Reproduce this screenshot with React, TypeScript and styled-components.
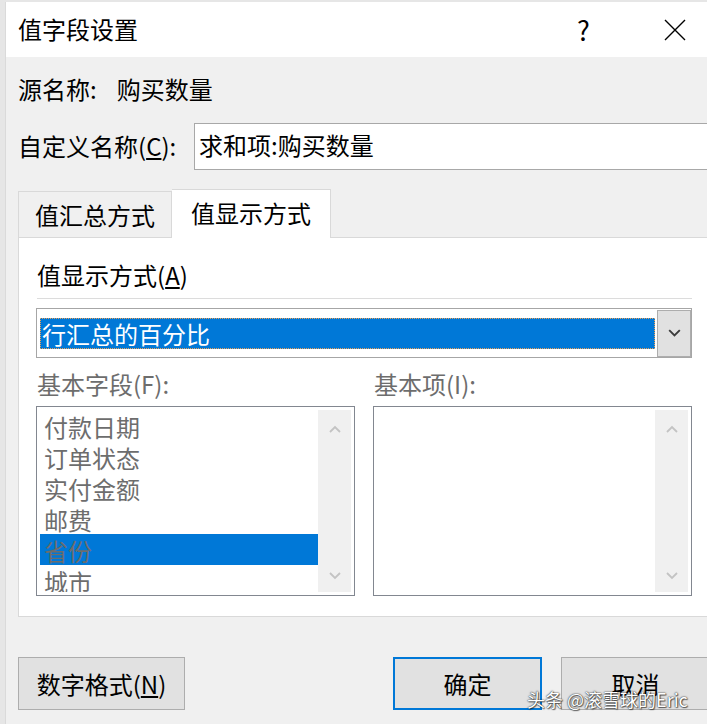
import * as React from "react";
import styled, { createGlobalStyle } from "styled-components";

const GlobalStyle = createGlobalStyle`
  html, body {
    margin: 0;
    padding: 0;
  }
  body {
    font-family: "Noto Sans CJK SC", "Microsoft YaHei", sans-serif;
    background: #e6e6e6;
  }
`;

const Screen = styled.div`
  position: relative;
  width: 707px;
  height: 724px;
  overflow: hidden;
  background: #e6e6e6;
  padding: 2px 0 0 5px;
  box-sizing: border-box;
`;

const Dialog = styled.div`
  display: flex;
  flex-direction: column;
  width: 715px;
  height: 100%;
  background: #f0f0f0;
  border-left: 1px solid #dadada;
  box-sizing: border-box;
  color: #000;
`;

const TitleBar = styled.div`
  display: flex;
  align-items: center;
  height: 55px;
  background: #fff;
  padding-left: 12px;
  flex-shrink: 0;
`;

const Title = styled.div`
  flex: 1;
  font-size: 24px;
  line-height: 30px;
  margin-top: -2px;
`;

const CaptionButton = styled.div`
  width: 91px;
  height: 55px;
  display: flex;
  align-items: center;
  justify-content: center;
  font-size: 27px;
  line-height: 30px;
`;

const Body = styled.div`
  display: flex;
  flex-direction: column;
  padding: 0 10px 0 12px;
  flex: 1;
`;

const SourceRow = styled.div`
  display: flex;
  align-items: center;
  height: 40px;
  margin-top: 11px;
  margin-bottom: 2px;
  font-size: 24px;
`;

const SourceValue = styled.span`
  margin-left: 20px;
`;

const NameRow = styled.div`
  display: flex;
  align-items: center;
  height: 47px;
  margin-top: 13px;
`;

const FieldLabel = styled.label`
  width: 176px;
  flex-shrink: 0;
  font-size: 24px;
  line-height: 30px;
  margin-top: -2px;
`;

const NameInput = styled.div`
  flex: 1;
  height: 47px;
  box-sizing: border-box;
  border: 1px solid #a8a8a8;
  background: #fff;
  font-size: 24px;
  line-height: 41px;
  padding-left: 4px;
`;

const TabBar = styled.div`
  display: flex;
  align-items: flex-end;
  height: 48px;
  margin-top: 19px;
  position: relative;
  z-index: 1;
`;

const Tab = styled.div<{ $selected?: boolean; $width: number }>`
  width: ${(p) => p.$width}px;
  height: ${(p) => (p.$selected ? 49 : 46)}px;
  margin-bottom: ${(p) => (p.$selected ? -1 : 0)}px;
  box-sizing: border-box;
  border: 1px solid #d9d9d9;
  border-bottom: none;
  border-left-width: ${(p) => (p.$selected ? 0 : 1)}px;
  background: ${(p) => (p.$selected ? "#fff" : "#f0f0f0")};
  display: flex;
  align-items: center;
  justify-content: center;
  padding-bottom: ${(p) => (p.$selected ? 2 : 0)}px;
  font-size: 24px;
  line-height: 30px;
`;

const Panel = styled.div`
  display: flex;
  flex-direction: column;
  border: 1px solid #d9d9d9;
  background: #fff;
  padding: 0 17px 20px 17px;
`;

const PanelLabel = styled.div<{ $muted?: boolean }>`
  height: ${(p) => (p.$muted ? 28 : 32)}px;
  line-height: ${(p) => (p.$muted ? 28 : 32)}px;
  font-size: 24px;
  padding-left: 1px;
  color: ${(p) => (p.$muted ? "#6d6d6d" : "#000")};
`;

const ShowLabel = styled(PanelLabel)`
  margin-top: 21px;
  margin-bottom: 1px;
`;

const Separator = styled.div`
  height: 1px;
  margin: 6px 0 0 1px;
  background: #dcdcdc;
`;

const Combo = styled.div`
  display: flex;
  align-items: center;
  height: 50px;
  margin-top: 9px;
  box-sizing: border-box;
  border: 1px solid #a6a6a6;
  background: #fff;
  padding: 1px 0 1px 3px;
`;

const ComboValue = styled.div`
  flex: 1;
  height: 31px;
  box-sizing: border-box;
  margin-right: 2px;
  background: #0078d7;
  border: 1px dotted #e9a15a;
  color: #fff;
  font-size: 24px;
  line-height: 29px;
  padding-left: 1px;
`;

const ComboButton = styled.div`
  width: 34px;
  height: 47px;
  box-sizing: border-box;
  background: #e1e1e1;
  border: 1px solid #adadad;
  display: flex;
  align-items: center;
  justify-content: center;
`;

const TwoColumns = styled.div<{ $gap: number }>`
  display: grid;
  grid-template-columns: 319px 319px;
  column-gap: 18px;
  margin-top: ${(p) => p.$gap}px;
`;

const ListBox = styled.div`
  display: flex;
  height: 190px;
  box-sizing: border-box;
  border: 1px solid #828790;
  background: #fff;
  padding: 3px;
  overflow: hidden;
`;

const Items = styled.div`
  flex: 1;
  overflow: hidden;
`;

const Item = styled.div<{ $selected?: boolean }>`
  height: 31px;
  box-sizing: border-box;
  padding: 2px 0 0 4px;
  line-height: 29px;
  font-size: 24px;
  color: #6d6d6d;
  background: ${(p) => (p.$selected ? "#0078d7" : "transparent")};
`;

const ScrollTrack = styled.div`
  width: 33px;
  flex-shrink: 0;
  background: #f0f0f0;
  display: flex;
  flex-direction: column;
  align-items: center;
  justify-content: space-between;
  padding: 15px 0 12px;
  box-sizing: border-box;
`;

const Footer = styled.div`
  display: flex;
  align-items: center;
  gap: 19px;
  margin-top: 40px;
  height: 53px;
`;

const Button = styled.div<{ $primary?: boolean; $width: number }>`
  width: ${(p) => p.$width}px;
  height: 53px;
  box-sizing: border-box;
  background: #e1e1e1;
  border: ${(p) => (p.$primary ? "2px solid #0078d7" : "1px solid #adadad")};
  display: flex;
  align-items: center;
  justify-content: center;
  font-size: 24px;
  line-height: 30px;
`;

const FooterSpacer = styled.div`
  flex: 1;
`;

const Watermark = styled.div`
  position: absolute;
  left: 527px;
  top: 688px;
  font-size: 18px;
  line-height: 22px;
  color: #fff;
  white-space: nowrap;
  text-shadow: 0 0 1px #333, 0 0 2px rgba(0, 0, 0, 0.7), 1px 1px 1px rgba(0, 0, 0, 0.5);
`;

const Chevron = ({ up, color, w = 12 }: { up?: boolean; color: string; w?: number }) => (
  <svg width={w} height={w / 2 + 2} viewBox="0 0 12 8">
    <path
      d={up ? "M1 7 L6 2 L11 7" : "M1 1 L6 6 L11 1"}
      fill="none"
      stroke={color}
      strokeWidth={1.8}
    />
  </svg>
);

const CloseIcon = () => (
  <svg width="22" height="22" viewBox="0 0 22 22">
    <path d="M1 1 L21 21 M21 1 L1 21" stroke="#000" strokeWidth="1.4" fill="none" />
  </svg>
);

const Scrollbar = () => (
  <ScrollTrack>
    <Chevron up color="#c3c3c3" />
    <Chevron color="#c3c3c3" />
  </ScrollTrack>
);

const baseFields = ["付款日期", "订单状态", "实付金额", "邮费", "省份", "城市"];

export default function App() {
  return (
    <Screen>
      <GlobalStyle />
      <Dialog>
        <TitleBar>
          <Title>值字段设置</Title>
          <CaptionButton>?</CaptionButton>
          <CaptionButton>
            <CloseIcon />
          </CaptionButton>
        </TitleBar>
        <Body>
          <SourceRow>
            <span>源名称:</span>
            <SourceValue>购买数量</SourceValue>
          </SourceRow>
          <NameRow>
            <FieldLabel>
              自定义名称(<u>C</u>):
            </FieldLabel>
            <NameInput>求和项:购买数量</NameInput>
          </NameRow>
          <TabBar>
            <Tab $width={154}>值汇总方式</Tab>
            <Tab $width={159} $selected>
              值显示方式
            </Tab>
          </TabBar>
          <Panel>
            <ShowLabel>
              值显示方式(<u>A</u>)
            </ShowLabel>
            <Separator />
            <Combo>
              <ComboValue>行汇总的百分比</ComboValue>
              <ComboButton>
                <Chevron color="#3c3c3c" w={13} />
              </ComboButton>
            </Combo>
            <TwoColumns $gap={12}>
              <PanelLabel $muted>基本字段(F):</PanelLabel>
              <PanelLabel $muted>基本项(I):</PanelLabel>
            </TwoColumns>
            <TwoColumns $gap={8}>
              <ListBox>
                <Items>
                  {baseFields.map((f) => (
                    <Item key={f} $selected={f === "省份"}>
                      {f}
                    </Item>
                  ))}
                </Items>
                <Scrollbar />
              </ListBox>
              <ListBox>
                <Items />
                <Scrollbar />
              </ListBox>
            </TwoColumns>
          </Panel>
          <Footer>
            <Button $width={167}>
              数字格式(<u>N</u>)
            </Button>
            <FooterSpacer />
            <Button $width={149} $primary>
              确定
            </Button>
            <Button $width={149}>取消</Button>
          </Footer>
        </Body>
      </Dialog>
      <Watermark>头条 @滚雪球的Eric</Watermark>
    </Screen>
  );
}
